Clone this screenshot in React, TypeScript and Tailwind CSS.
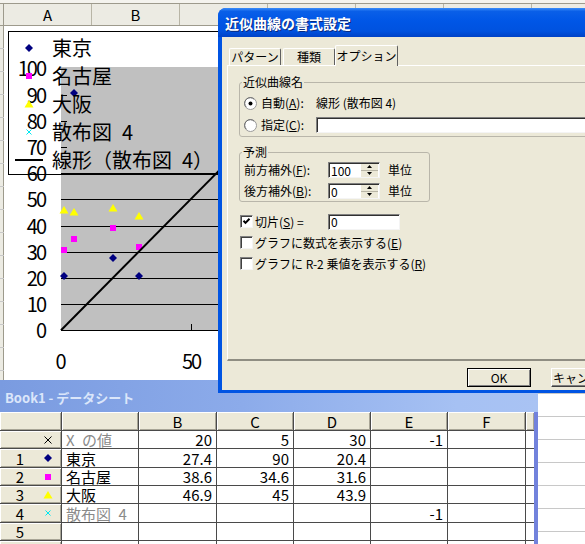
import React from "react";

const JP = "font-['Noto_Sans_CJK_JP','Noto_Sans',sans-serif]";

type MK = "diamond" | "square" | "triangle" | "cross" | "x";

function Shape({ kind, cx, cy }: { kind: MK; cx: number; cy: number }) {
  if (kind === "diamond")
    return <polygon points={`${cx},${cy - 4} ${cx + 4},${cy} ${cx},${cy + 4} ${cx - 4},${cy}`} fill="#000080" />;
  if (kind === "square") return <rect x={cx - 3} y={cy - 3} width={6} height={6} fill="#ff00ff" />;
  if (kind === "triangle")
    return <polygon points={`${cx},${cy - 4} ${cx + 4.5},${cy + 3.5} ${cx - 4.5},${cy + 3.5}`} fill="#ffff00" />;
  if (kind === "cross")
    return (
      <g stroke="#00e8f0" strokeWidth={1}>
        <line x1={cx - 2.5} y1={cy - 2.5} x2={cx + 2.5} y2={cy + 2.5} />
        <line x1={cx + 2.5} y1={cy - 2.5} x2={cx - 2.5} y2={cy + 2.5} />
      </g>
    );
  return (
    <g stroke="#000" strokeWidth={1}>
      <line x1={cx - 3.5} y1={cy - 3.5} x2={cx + 3.5} y2={cy + 3.5} />
      <line x1={cx + 3.5} y1={cy - 3.5} x2={cx - 3.5} y2={cy + 3.5} />
    </g>
  );
}

function Marker({ kind }: { kind: MK }) {
  return (
    <svg width="10" height="10" viewBox="-5 -5 10 10" className="shrink-0">
      <Shape kind={kind} cx={0} cy={0} />
    </svg>
  );
}

function Sheet() {
  const cols = ["A", "B", "", "", "", "", ""];
  return (
    <div className="absolute inset-0 flex flex-col">
      <div className="h-[4px] shrink-0 bg-[#f4f3ee] border-b border-[#9d9a8c]" />
      <div className="h-[22px] shrink-0 flex bg-[#ecebe3] border-b border-[#9d9a8c]">
        <div className="w-[4px] shrink-0 border-r border-[#9d9a8c]" />
        {cols.map((c, i) => (
          <div
            key={i}
            className="w-[88px] shrink-0 border-r border-[#b8b5a6] flex items-center justify-center text-[15px] leading-none text-black"
          >
            {c}
          </div>
        ))}
      </div>
      {Array.from({ length: 23 }).map((_, i) => (
        <div key={i} className="h-[23px] shrink-0 flex border-b border-[#c8c8c8]">
          <div className="w-[4px] shrink-0 bg-[#ecebe3] border-r border-[#9d9a8c]" />
          {cols.map((c, j) => (
            <div key={j} className="w-[88px] shrink-0 border-r border-[#c8c8c8]" />
          ))}
        </div>
      ))}
    </div>
  );
}

function Chart() {
  const Y0 = 330.3;
  const DY = 2.62;
  const yv = (v: number) => Y0 - v * DY;
  const lines = [1, 2, 3, 4, 5, 6];
  const ticks = [7, 8, 9];
  const diamonds: [number, number][] = [
    [64, 276],
    [113, 258],
    [139, 276],
    [74, 93],
  ];
  const squares: [number, number][] = [
    [64, 250],
    [74, 239],
    [113, 228],
    [139, 247],
  ];
  const tris: [number, number][] = [
    [64, 210],
    [74, 212],
    [113, 208],
    [139, 216],
  ];
  const yLabels = [0, 10, 20, 30, 40, 50, 60, 70, 80, 90, 100];
  const legend: { kind: MK | "line"; text: string }[] = [
    { kind: "diamond", text: "東京" },
    { kind: "square", text: "名古屋" },
    { kind: "triangle", text: "大阪" },
    { kind: "cross", text: "散布図\u20024" },
    { kind: "line", text: "線形（散布図\u20024）" },
  ];
  return (
    <div className="absolute left-[4px] top-[26px] w-[216px] h-[354px] bg-white overflow-hidden">
      <svg className="absolute left-0 top-0" width="216" height="354" viewBox="4 26 216 354">
        <rect x="61" y="67" width="170" height="263.5" fill="#c0c0c0" />
        {lines.map((k) => {
          const y = Math.round(yv(k * 10)) + 0.5;
          return <line key={k} x1="61" x2="231" y1={y} y2={y} stroke="#000" strokeWidth="1" />;
        })}
        {ticks.map((k) => {
          const y = Math.round(yv(k * 10)) + 0.5;
          return <line key={k} x1="61" x2="67" y1={y} y2={y} stroke="#000" strokeWidth="1" />;
        })}
        <line x1="61" x2="231" y1="330.5" y2="330.5" stroke="#000" strokeWidth="1" />
        <line x1="191.5" x2="191.5" y1="324" y2="330" stroke="#000" strokeWidth="1" />
        {diamonds.map(([x, y], i) => (
          <Shape key={"d" + i} kind="diamond" cx={x} cy={y} />
        ))}
        {squares.map(([x, y], i) => (
          <Shape key={"s" + i} kind="square" cx={x} cy={y} />
        ))}
        {tris.map(([x, y], i) => (
          <Shape key={"t" + i} kind="triangle" cx={x} cy={y} />
        ))}
        <line x1="61" y1="330.3" x2="231" y2="158.5" stroke="#000" strokeWidth="2" />
      </svg>

      {yLabels.map((v) => (
        <div
          key={v}
          className="absolute left-0 w-[41px] text-right text-[20px] leading-[20px] tracking-[-2px] text-black"
          style={{ top: yv(v) - 26 - 10 }}
        >
          {v}
        </div>
      ))}
      <div className="absolute left-[47px] top-[325px] w-[20px] text-center text-[20px] leading-[20px] text-black">0</div>
      <div className="absolute left-[172px] top-[325px] w-[30px] text-center text-[20px] leading-[20px] tracking-[-2px] text-black">
        50
      </div>

      <div className="absolute left-[4px] top-[5px] w-[240px] h-[144px] border border-black pt-[2px] flex flex-col">
        {legend.map((l) => (
          <div key={l.text} className="h-[28px] flex items-center">
            <div className="w-[40px] flex justify-center">
              {l.kind === "line" ? (
                <div className="w-[28px] h-[2px] bg-black" />
              ) : (
                <Marker kind={l.kind} />
              )}
            </div>
            <span className="ml-[3px] text-[20px] leading-[28px] text-black whitespace-nowrap">{l.text}</span>
          </div>
        ))}
      </div>
    </div>
  );
}

function U({ c }: { c: string }) {
  return <span className="underline underline-offset-1">{c}</span>;
}

function Radio({ on }: { on?: boolean }) {
  return (
    <svg width="13" height="13" viewBox="0 0 13 13" className="shrink-0">
      <circle cx="6.5" cy="6.5" r="6" fill="#fff" stroke="#9a9a9a" />
      <path d="M2.3 10.2 A5.2 5.2 0 0 1 10.2 2.3" stroke="#6a6a6a" fill="none" strokeWidth="1" />
      {on && <circle cx="6.5" cy="6.5" r="2" fill="#000" />}
    </svg>
  );
}

function Check({ on }: { on?: boolean }) {
  return (
    <div className="w-[13px] h-[13px] shrink-0 bg-white border border-t-[#808080] border-l-[#808080] border-r-[#f4f4f4] border-b-[#f4f4f4] shadow-[inset_1px_1px_0_#404040] flex items-center justify-center">
      {on && (
        <svg width="9" height="9" viewBox="0 0 9 9">
          <path d="M1.5 3.8 L3.5 5.9 L7.5 1.8" stroke="#000" strokeWidth="2" fill="none" />
        </svg>
      )}
    </div>
  );
}

const sunken =
  "bg-white border border-t-[#808080] border-l-[#808080] border-r-[#f4f4f4] border-b-[#f4f4f4] shadow-[inset_1px_1px_0_#303030]";

function Spin({ v }: { v: string }) {
  return (
    <div className={`w-[52px] h-[16px] flex ${sunken}`}>
      <span className="flex-1 text-[12px] leading-[14px] pl-[2px] pt-px text-black">{v}</span>
      <div className="w-[17px] flex flex-col mt-px mr-px">
        <div className="flex-1 bg-[#ece9d8] flex items-center justify-center border-b border-[#b8b5a6]">
          <svg width="5" height="3" viewBox="0 0 5 3">
            <path d="M0 3 L2.5 0 L5 3Z" fill="#000" />
          </svg>
        </div>
        <div className="flex-1 bg-[#ece9d8] flex items-center justify-center">
          <svg width="5" height="3" viewBox="0 0 5 3">
            <path d="M0 0 L2.5 3 L5 0Z" fill="#000" />
          </svg>
        </div>
      </div>
    </div>
  );
}

function Dialog() {
  return (
    <div className="absolute left-[218px] top-[8px] w-[382px] h-[385px] rounded-t-[8px] bg-[#0054e3] flex flex-col overflow-hidden">
      <div className="h-[29px] shrink-0 bg-[linear-gradient(to_bottom,#3a8cf8_0%,#0a5fe8_12%,#0056e6_45%,#0052df_80%,#0042c6_100%)] flex items-center pl-[7px]">
        <span className="text-white font-bold text-[14px] leading-none [text-shadow:1px_1px_0_#0a2a80]">
          近似曲線の書式設定
        </span>
      </div>
      <div className="flex-1 ml-[4px] mb-[3px] bg-[#ece9d8] flex flex-col text-[12px] text-black">
        <div className="mt-[8px] pl-[7px] h-[20px] flex items-end relative z-10">
          <div className="w-[52px] h-[17px] bg-[#ece9d8] border-t border-l border-white border-r border-r-[#606060] rounded-t-[2px] flex items-center justify-center leading-none">
            パターン
          </div>
          <div className="ml-[2px] w-[52px] h-[17px] bg-[#ece9d8] border-t border-l border-white border-r border-r-[#606060] rounded-t-[2px] flex items-center justify-center leading-none">
            種類
          </div>
          <div className="w-[63px] h-[21px] -mb-px bg-[#ece9d8] border-t border-l border-white border-r border-r-[#606060] rounded-t-[2px] flex items-center justify-center leading-none pb-[1px]">
            オプション
          </div>
        </div>
        <div className="ml-[5px] w-[400px] h-[296px] shrink-0 border-t border-l border-white border-b-2 border-b-[#8f8d82] flex flex-col">
          <fieldset className="mt-[9px] ml-[11px] w-[400px] border border-[#b9b6aa] rounded-[3px] pt-[3px] pb-0">
            <legend className="ml-[2px] px-[1px] leading-[14px]">近似曲線名</legend>
            <div className="h-[22px] flex items-center pl-[4px]">
              <div className="w-[72px] flex items-center">
                <Radio on />
                <span className="ml-[4px] leading-none">
                  自動(<U c="A" />):
                </span>
              </div>
              <span className="leading-none">線形 (散布図 4)</span>
            </div>
            <div className="h-[22px] flex items-center pl-[4px]">
              <div className="w-[72px] flex items-center">
                <Radio />
                <span className="ml-[4px] leading-none">
                  指定(<U c="C" />):
                </span>
              </div>
              <div className={`flex-1 h-[16px] ${sunken}`} />
            </div>
          </fieldset>
          <fieldset className="mt-[8px] ml-[11px] w-[191px] border border-[#b9b6aa] rounded-[3px] p-0">
            <legend className="ml-[2px] px-[1px] leading-[14px]">予測</legend>
            <div className="h-[21px] flex items-center pl-[4px]">
              <span className="w-[84px] leading-none">
                前方補外(<U c="F" />):
              </span>
              <Spin v="100" />
              <span className="ml-[8px] leading-none">単位</span>
            </div>
            <div className="h-[21px] flex items-center pl-[4px]">
              <span className="w-[84px] leading-none">
                後方補外(<U c="B" />):
              </span>
              <Spin v="0" />
              <span className="ml-[8px] leading-none">単位</span>
            </div>
          </fieldset>
          <div className="mt-[9px] ml-[12px] flex flex-col">
            <div className="h-[21px] flex items-center">
              <Check on />
              <span className="ml-[2px] w-[73px] leading-none">
                切片(<U c="S" />) =
              </span>
              <div className={`w-[72px] h-[16px] ${sunken} text-[12px] leading-[14px] pl-[2px]`}>0</div>
            </div>
            <div className="h-[21px] flex items-center">
              <Check />
              <span className="ml-[2px] leading-none">
                グラフに数式を表示する(<U c="E" />)
              </span>
            </div>
            <div className="h-[21px] flex items-center">
              <Check />
              <span className="ml-[2px] leading-none">
                グラフに R-2 乗値を表示する(<U c="R" />)
              </span>
            </div>
          </div>
        </div>
        <div className="mt-[7px] pl-[245px] flex gap-[20px]">
          <div className="w-[64px] h-[19px] shrink-0 border border-black bg-[#ece9d8] shadow-[inset_1px_1px_0_#fff,inset_-1px_-1px_0_#808080] flex items-center justify-center leading-none">
            OK
          </div>
          <div className="w-[64px] h-[19px] shrink-0 border border-t-white border-l-white border-r-[#404040] border-b-[#404040] bg-[#ece9d8] shadow-[inset_-1px_-1px_0_#808080] flex items-center justify-center whitespace-nowrap leading-none">
            キャンセル
          </div>
        </div>
      </div>
    </div>
  );
}

type Row = { n: string; mk?: MK; name: string; gray?: boolean; vals: string[] };

function DataSheet() {
  const head = ["B", "C", "D", "E", "F"];
  const rows: Row[] = [
    { n: "", mk: "x", name: "X\u2002の値", gray: true, vals: ["20", "5", "30", "-1", ""] },
    { n: "1", mk: "diamond", name: "東京", vals: ["27.4", "90", "20.4", "", ""] },
    { n: "2", mk: "square", name: "名古屋", vals: ["38.6", "34.6", "31.6", "", ""] },
    { n: "3", mk: "triangle", name: "大阪", vals: ["46.9", "45", "43.9", "", ""] },
    { n: "4", mk: "cross", name: "散布図\u20024", gray: true, vals: ["", "", "", "-1", ""] },
    { n: "5", name: "", vals: ["", "", "", "", ""] },
    { n: "", name: "", vals: ["", "", "", "", ""] },
  ];
  const hdr = "bg-[#ece9d8] shadow-[inset_1px_1px_0_#fff,inset_-1px_-1px_0_#a8a596]";
  return (
    <div className="absolute left-0 top-[380px] w-[538px] h-[170px] flex flex-col">
      <div className="h-[32px] shrink-0 bg-[linear-gradient(to_right,#7a9be0_0%,#8cabea_45%,#a6c1f3_85%,#a9c3f3_100%)] flex items-center pl-[5px] pt-[3px]">
        <span className="text-[13px] font-bold leading-none text-[#dbe6fa]">Book1 - データシート</span>
      </div>
      <div className="flex flex-1">
        <div className="w-[534px] grid gap-px bg-[#4a4a4a] grid-cols-[61px_76px_77px_76px_76px_76px_77px_8px] grid-rows-[18px_17px_18px_17px_17px_18px_17px_17px] content-start text-[15px] text-black">
          <div className={hdr} />
          <div className={hdr} />
          {head.map((h) => (
            <div key={h} className={`${hdr} flex items-center justify-center leading-none`}>
              {h}
            </div>
          ))}
          <div className={hdr} />
          {rows.map((r, i) => (
            <React.Fragment key={i}>
              <div className={`${hdr} flex items-center`}>
                <span className="w-[40px] text-center leading-none">{r.n}</span>
                <span className="w-[16px] flex justify-center">{r.mk && <Marker kind={r.mk} />}</span>
              </div>
              <div
                className={`bg-white flex items-center pl-[4px] leading-none whitespace-nowrap ${
                  r.gray ? "text-[#8a8a8a]" : "text-black"
                }`}
              >
                {r.name}
              </div>
              {r.vals.map((v, j) => (
                <div key={j} className="bg-white flex items-center justify-end pr-[4px] leading-none">
                  {v}
                </div>
              ))}
              <div className="bg-white" />
            </React.Fragment>
          ))}
        </div>
        <div className="w-[4px] bg-[#7282dc]" />
      </div>
    </div>
  );
}

export default function App() {
  return (
    <div className={`relative w-[585px] h-[544px] overflow-hidden bg-white ${JP}`}>
      <Sheet />
      <Chart />
      <DataSheet />
      <Dialog />
    </div>
  );
}
